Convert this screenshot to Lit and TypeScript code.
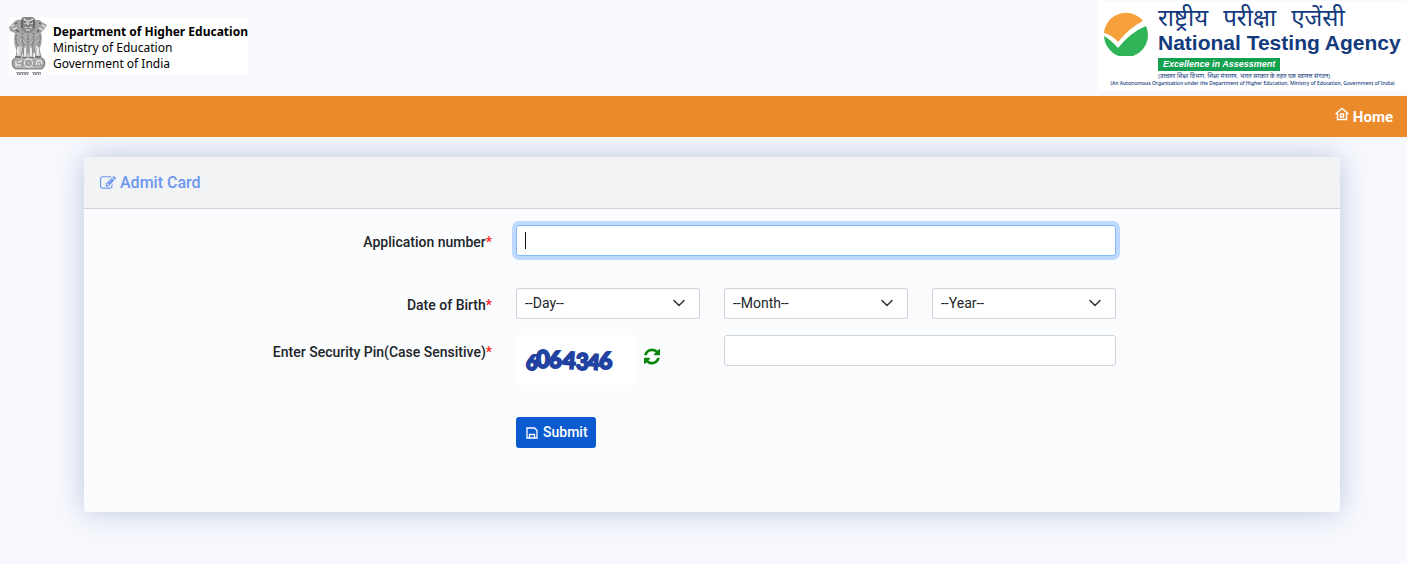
import { LitElement, html, css, svg } from "lit";
import { customElement, query } from "lit/decorators.js";

const range = (from: number, to: number) =>
  Array.from({ length: to - from + 1 }, (_, i) => from + i);

const MONTHS = [
  "January", "February", "March", "April", "May", "June",
  "July", "August", "September", "October", "November", "December",
];

@customElement("ministry-brand")
class MinistryBrand extends LitElement {
  static styles = css`
    :host {
      display: flex;
      align-items: center;
      gap: 6px;
      height: 58px;
      background: #fff;
      color: #000;
      font-family: "Noto Sans", "Open Sans", sans-serif;
      font-size: 12px;
      line-height: 16px;
      white-space: nowrap;
    }
    .emblem { width: 38px; height: 58px; flex: none; }
    .lines { padding-top: 4px; }
    .name { font-weight: 700; }
  `;

  render() {
    return html`
      <svg class="emblem" viewBox="0 0 38 58" aria-hidden="true">
        <path d="M6 4Q10 1 13 4L16 8H22L25 4Q29 1 33 5L38 8L34 14L32 15Q35 26 28 36L10 37Q3 28 6 16L1 14L0 10Z" fill="#a2a2a2"/>
        <path d="M12 2Q14 -1 19 0Q24 -1 26 2V11Q24 16 19 16Q14 16 12 11Z" fill="#888"/>
        <path d="M15 2L17 4H21L24 2M15 6H18M21 6H24M19 5V9M16 11Q19 8 23 11M17 13H21" fill="none" stroke="#eee" stroke-width="1.2"/>
        <path d="M13 3V11M25 3V11M15 5H17M21 5H23M17 9H21" stroke="#444" stroke-width="1"/>
        <path d="M2 9L5 8M4 12L8 11M33 8L36 10M30 11L34 13" stroke="#eee" stroke-width="1.2"/>
        <path d="M6 7L8 6M30 6L32 7M7 13L10 15M30 13L28 15" stroke="#555" stroke-width="1.2"/>
        <path d="M9 16L12 20M8 20L12 24M8 24L13 28M13 17L17 21M12 22L17 26M21 21L25 17M21 26L26 21M26 20L30 17M26 26L31 22M26 30L30 27M16 17L19 20L22 17M16 30L19 27L22 30" fill="none" stroke="#ddd" stroke-width="0.9" stroke-dasharray="1.4 0.8"/>
        <path d="M7 18Q6 26 11 32M31 18Q32 26 27 32M14 16Q12 24 16 31M24 16Q26 24 22 31M19 18V30" fill="none" stroke="#6a6a6a" stroke-width="0.9" stroke-dasharray="2 1"/>
        <path d="M9 28L7 40H12L14 30M15 29L14 41H18V29M20 29V41H24L23 29M25 29L27 40H32L29 28" fill="#ccc" stroke="#888" stroke-width="0.9"/>
        <path d="M9 30V38M16 31V39M22 31V39M29 30V38" stroke="#f6f6f6" stroke-width="1.5"/>
        <path d="M6 40H12M13 41H18M20 41H25M26 40H32" stroke="#666" stroke-width="1.4"/>
        <path d="M6 41H33Q36 42 36 46Q36 50 33 52H6Q3 50 3 46Q3 42 6 41Z" fill="#a2a2a2" stroke="#707070" stroke-width="0.8"/>
        <path d="M6 42H32M6 50H32" stroke="#d0d0d0" stroke-width="0.9"/>
        <circle cx="19.500" cy="46" r="4" fill="#888" stroke="#e8e8e8" stroke-width="1.3"/>
        <path d="M19.500 42V50M16 46H23M17 43L22 49M22 43L17 49" stroke="#ccc" stroke-width="0.6"/>
        <path d="M7 44V48H12M9 45L13 44M27 48L28 44H32L33 47M29 47H31" fill="none" stroke="#e8e8e8" stroke-width="1.4"/>
        <path d="M7 55.500H20M23 55.500H32" stroke="#888" stroke-width="0.8"/>
        <path d="M8 57H20M24 57H32" stroke="#888" stroke-width="2" stroke-dasharray="1.6 0.8"/>
      </svg>
      <div class="lines">
        <div class="name">Department of Higher Education</div>
        <div>Ministry of Education</div>
        <div>Government of India</div>
      </div>
    `;
  }
}

@customElement("agency-brand")
class AgencyBrand extends LitElement {
  static styles = css`
    :host {
      display: block;
      width: 309px;
      height: 90px;
      background: #fff;
      color: #123a7c;
      font-family: "Liberation Sans", "Noto Sans", sans-serif;
      white-space: nowrap;
    }
    .top { display: flex; gap: 10px; padding: 3px 0 0 5px; }
    .mark { width: 45px; height: 45px; flex: none; margin-top: 7px; }
    .hindi {
      display: flex;
      gap: 15px;
      font-family: "Noto Sans", "Noto Sans Devanagari", sans-serif;
      font-size: 24px;
      line-height: 26px;
    }
    .english { font-size: 21px; line-height: 26px; font-weight: 700; }
    .motto {
      width: max-content;
      margin-top: 2px;
      padding: 0 5px;
      background: #13a04f;
      color: #fff;
      font-size: 9px;
      line-height: 13px;
      font-weight: 700;
      font-style: italic;
    }
    .note-hindi { padding: 2px 0 0 60px; font-size: 6px; line-height: 7px; }
    .note {
      font-family: "Noto Sans", sans-serif;
      font-size: 5px;
      line-height: 7px;
      font-weight: 500;
      text-align: center;
    }
  `;

  render() {
    return html`
      <div class="top">
        <svg class="mark" viewBox="0 0 45 45" aria-hidden="true">
          <path d="M1 22A22 22 0 0 1 40 10Q26 17 15 31Q9 24 1 22Z" fill="#f6a13c"/>
          <path d="M1 25Q8 29 15 37Q28 21 43 15A22 22 0 1 1 1 25Z" fill="#2fb457"/>
        </svg>
        <div>
          <div class="hindi" lang="hi"><span>राष्ट्रीय</span><span>परीक्षा</span><span>एजेंसी</span></div>
          <div class="english">National Testing Agency</div>
          <div class="motto">Excellence in Assessment</div>
        </div>
      </div>
      <div class="note-hindi" lang="hi">(उच्चतर शिक्षा विभाग, शिक्षा मंत्रालय, भारत सरकार के तहत एक स्वायत्त संगठन)</div>
      <div class="note">(An Autonomous Organization under the Department of Higher Education, Ministry of Education, Government of India)</div>
    `;
  }
}

const captchaGlyphs = [
  { ch: "6", x: 10, y: 35, size: 20, turn: 0 },
  { ch: "0", x: 20, y: 33, size: 24, turn: 0 },
  { ch: "6", x: 33, y: 33, size: 22, turn: 0 },
  { ch: "4", x: 46, y: 33, size: 23, turn: 4 },
  { ch: "3", x: 60, y: 35, size: 22, turn: 0 },
  { ch: "4", x: 71, y: 34, size: 21, turn: 4 },
  { ch: "6", x: 83, y: 34, size: 23, turn: 0 },
];

@customElement("app-root")
class AppRoot extends LitElement {
  static styles = css`
    :host {
      display: block;
      min-height: 100vh;
      background: #f8f9fe;
      color: #212529;
      font-family: Roboto, "Open Sans", sans-serif;
      font-size: 14px;
      line-height: 21px;
    }
    * { box-sizing: border-box; }
    .masthead {
      display: flex;
      justify-content: space-between;
      align-items: flex-start;
      height: 96px;
      background: #f8f9fc;
    }
    ministry-brand { margin: 17px 0 0 9px; }
    agency-brand { margin-top: 1px; }
    .nav {
      position: relative;
      z-index: 1;
      display: flex;
      justify-content: flex-end;
      padding: 9px 14px 7px;
      background: #ea8a2a;
    }
    .home {
      display: flex;
      gap: 4px;
      color: #fff;
      font-size: 15px;
      line-height: 25px;
      font-weight: 700;
      text-decoration: none;
    }
    .home svg { width: 14px; height: 14px; margin-top: 2px; }
    .card {
      margin: 20px 67px 52px 84px;
      border-radius: 4px;
      background: #fbfcfe;
      box-shadow: 0 0 30px rgba(50, 85, 150, 0.3);
    }
    .title {
      display: flex;
      align-items: center;
      gap: 4px;
      margin: 0;
      padding: 14px 16px 13px;
      border-bottom: 1px solid #d1d3d6;
      border-radius: 4px 4px 0 0;
      background: #f2f3f5;
      color: #6c97ee;
      font-size: 16px;
      line-height: 24px;
      font-weight: 500;
    }
    .title svg { width: 16px; height: 16px; }
    .form {
      display: grid;
      grid-template-columns: repeat(12, minmax(0, 1fr));
      column-gap: 24px;
      padding: 16px 16px 64px;
    }
    .label {
      grid-column: 1 / span 4;
      padding-top: 7px;
      text-align: right;
      font-weight: 500;
    }
    .required { color: #f22; }
    .control {
      width: 100%;
      height: 31px;
      padding: 4px 8px;
      border: 1px solid #ced4da;
      border-radius: 3px;
      background-color: #fff;
      color: #212529;
      font: inherit;
      outline: none;
    }
    .number {
      grid-column: 5 / span 6;
      margin-bottom: 32px;
    }
    .number:focus {
      border-color: #86b7fe;
      box-shadow: 0 0 0 4px #bfdafe;
      background-image: linear-gradient(#111, #111);
      background-repeat: no-repeat;
      background-size: 1px 17px;
      background-position: 8px 6px;
    }
    .number:not(:placeholder-shown) { background-image: none; }
    .pick {
      position: relative;
      grid-column: span 2;
      margin-bottom: 16px;
    }
    .pick select { display: block; appearance: none; padding: 3px 8px; }
    .pick svg {
      position: absolute;
      right: 15px;
      top: 9px;
      width: 12px;
      height: 12px;
      pointer-events: none;
    }
    .captcha {
      grid-column: 5 / span 2;
      display: flex;
      gap: 8px;
      margin-bottom: 32px;
    }
    .code { width: 120px; height: 50px; background: #fff; }
    .code text {
      fill: #2142a0;
      stroke: #2142a0;
      stroke-width: 1.8px;
      font-family: Lato, sans-serif;
      font-weight: 900;
    }
    .refresh {
      align-self: flex-start;
      margin-top: 13px;
      padding: 0;
      border: 0;
      background: none;
      line-height: 0;
      cursor: pointer;
    }
    .refresh svg { width: 16px; height: 17px; }
    .pin { grid-column: 7 / span 4; }
    .submit {
      grid-column: 5 / span 2;
      justify-self: start;
      display: flex;
      align-items: center;
      gap: 5px;
      height: 31px;
      padding: 4px 8px 4px 10px;
      border: 0;
      border-radius: 3px;
      background: #0b5acf;
      color: #fff;
      font: inherit;
      font-weight: 500;
      cursor: pointer;
    }
    .submit svg { width: 12px; height: 12px; }
  `;

  @query(".number") private numberField!: HTMLInputElement;

  firstUpdated() {
    this.numberField.focus();
  }

  private picker(id: string, caption: string, options: (string | number)[]) {
    return html`
      <div class="pick">
        <select class="control" id=${id} aria-label=${caption}>
          <option>--${caption}--</option>
          ${options.map((o) => html`<option>${o}</option>`)}
        </select>
        <svg viewBox="0 0 12 12" aria-hidden="true">
          <path d="M1 3.500L6 8.500L11 3.500" fill="none" stroke="#343a40" stroke-width="1.600" stroke-linecap="round" stroke-linejoin="round"/>
        </svg>
      </div>
    `;
  }

  render() {
    return html`
      <header class="masthead">
        <ministry-brand></ministry-brand>
        <agency-brand></agency-brand>
      </header>
      <nav class="nav">
        <a class="home" href="#">
          <svg viewBox="0 0 14 14" fill="none" stroke="#fff" stroke-width="1.4" aria-hidden="true">
            <path d="M0.500 7L7 1.500L13.500 7M2.500 6V12.500H11.500V6"/>
            <rect x="5.500" y="7" width="3" height="3"/>
          </svg>
          Home
        </a>
      </nav>
      <main class="card">
        <h1 class="title">
          <svg viewBox="0 0 1792 1792" fill="currentColor" aria-hidden="true">
            <path d="M888 1184l116-116-152-152-116 116v56h96v96h56zm440-720q-16-16-33 1l-350 350q-17 17-1 33t33-1l350-350q17-17 1-33zm80 594v190q0 119-84.500 203.500t-203.500 84.500h-832q-119 0-203.500-84.500t-84.500-203.500v-832q0-119 84.500-203.500t203.500-84.500h832q63 0 117 25 15 7 18 23 3 17-9 29l-49 49q-14 14-32 8-23-6-45-6h-832q-66 0-113 47t-47 113v832q0 66 47 113t113 47h832q66 0 113-47t47-113v-126q0-13 9-22l64-64q15-15 35-7t20 29zm-96-738l288 288-672 672h-288v-288zm444 132l-92 92-288-288 92-92q28-28 68-28t68 28l152 152q28 28 28 68t-28 68z"/>
          </svg>
          Admit Card
        </h1>
        <form class="form" @submit=${(e: Event) => e.preventDefault()}>
          <label class="label" for="number">Application number<span class="required">*</span></label>
          <input class="control number" id="number" type="text" placeholder=" " autocomplete="off" />

          <label class="label" for="day">Date of Birth<span class="required">*</span></label>
          ${this.picker("day", "Day", range(1, 31))}
          ${this.picker("month", "Month", MONTHS)}
          ${this.picker("year", "Year", range(1970, 2010))}

          <label class="label" for="pin">Enter Security Pin(Case Sensitive)<span class="required">*</span></label>
          <div class="captcha">
            <svg class="code" viewBox="0 0 120 50">
              ${captchaGlyphs.map((g) => svg`<text x=${g.x} y=${g.y} rotate=${g.turn} font-size=${g.size}>${g.ch}</text>`)}
            </svg>
            <button class="refresh" type="button" aria-label="Refresh security pin">
              <svg viewBox="128 128 1536 1536" fill="#068506" aria-hidden="true">
                <path d="M1639 1056q0 5-1 7-64 268-268 434.500t-478 166.500q-146 0-282.500-55t-243.500-157l-129 129q-19 19-45 19t-45-19-19-45v-448q0-26 19-45t45-19h448q26 0 45 19t19 45-19 45l-137 137q71 66 161 102t187 36q134 0 250-65t186-179q11-17 53-117 8-23 30-23h192q13 0 22.500 9.500t9.500 22.500zm25-800v448q0 26-19 45t-45 19h-448q-26 0-45-19t-19-45 19-45l138-138q-148-137-349-137-134 0-250 65t-186 179q-11 17-53 117-8 23-30 23h-199q-13 0-22.500-9.500t-9.500-22.500v-7q65-268 270-434.500t480-166.500q146 0 284 55.500t245 156.500l130-129q19-19 45-19t45 19 19 45z"/>
              </svg>
            </button>
          </div>
          <input class="control pin" id="pin" type="text" autocomplete="off" />

          <button class="submit" type="submit">
            <svg viewBox="0 0 12 12" fill="none" stroke="#fff" stroke-width="1.300" aria-hidden="true">
              <path d="M1 1H8.500L11 3.500V11H1ZM3.500 11V7.500H8.500V11"/>
            </svg>
            Submit
          </button>
        </form>
      </main>
    `;
  }
}
